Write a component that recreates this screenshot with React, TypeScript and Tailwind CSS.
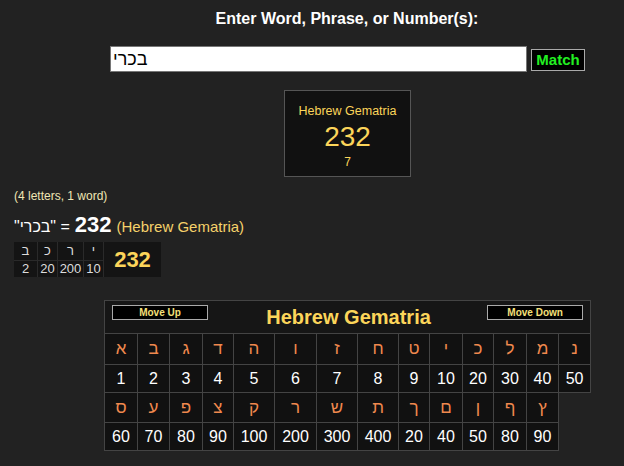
import React from 'react'

const row1 = [
  ['א', '1'], ['ב', '2'], ['ג', '3'], ['ד', '4'], ['ה', '5'], ['ו', '6'], ['ז', '7'],
  ['ח', '8'], ['ט', '9'], ['י', '10'], ['כ', '20'], ['ל', '30'], ['מ', '40'], ['נ', '50'],
]
const row2 = [
  ['ס', '60'], ['ע', '70'], ['פ', '80'], ['צ', '90'], ['ק', '100'], ['ר', '200'], ['ש', '300'],
  ['ת', '400'], ['ך', '20'], ['ם', '40'], ['ן', '50'], ['ף', '80'], ['ץ', '90'],
]
const widths = ['w-[33px]', 'w-[32px]', 'w-[33px]', 'w-[31px]', 'w-[41px]', 'w-[42px]', 'w-[41px]', 'w-[41px]', 'w-[31px]', 'w-[33px]', 'w-[31px]', 'w-[33px]', 'w-[32px]', 'w-[32px]']

const small = [['ב', '2'], ['כ', '20'], ['ר', '200'], ['י', '10']]

const App = () => {
  return (
    <div className="w-[624px] h-[466px] bg-[#222222] text-white font-['Liberation_Sans',Arial,sans-serif] overflow-hidden">
      {/* Search */}
      <div className="pt-[10px] pl-[70px] text-center font-bold text-[16px] leading-[18px]">
        Enter Word, Phrase, or Number(s):
      </div>
      <div className="flex items-start pl-[110px] mt-[18px] gap-[4px]">
        <input
          readOnly
          value="בכרי"
          className="w-[417px] h-[26px] bg-white border border-[#767676] text-black text-[18px] px-[2px] outline-none font-['Liberation_Sans',Arial,sans-serif]"
        />
        <button className="mt-[3px] h-[22px] w-[54px] bg-black border border-[#aaaaaa] text-[#22ee22] font-bold text-[15px] leading-[18px]">
          Match
        </button>
      </div>

      {/* Result box */}
      <div className="mt-[18px] ml-[284px] w-[127px] h-[87px] bg-[#111111] border border-[#555555] flex flex-col items-center pt-[13px] text-[#fcd55a]">
        <div className="text-[12.5px] leading-[14px]">Hebrew Gematria</div>
        <div className="text-[28px] leading-[32px] mt-[3px]">232</div>
        <div className="text-[12px] leading-[14px] mt-[2px]">7</div>
      </div>

      {/* Summary */}
      <div className="pl-[14px] mt-[12px] text-[12px] leading-[14px] text-[#f0e6b4]">(4 letters, 1 word)</div>
      <div className="pl-[14px] mt-[12px] flex items-baseline gap-[5px] leading-[20px]">
        <span className="text-[16px]">"בכרי" =</span>
        <span className="text-[22px] font-bold">232</span>
        <span className="text-[15px] text-[#f5d16a]">(Hebrew Gematria)</span>
      </div>
      <div className="ml-[14px] mt-[5px] w-[146px] grid grid-cols-[23px_19px_25px_19px_57px] grid-rows-[18px_16px] gap-px bg-[#2a2a2a]">
        {small.map(([l]) => (
          <div key={'l' + l} className="bg-[#141414] text-[#dddddd] text-[13px] leading-[18px] text-center">{l}</div>
        ))}
        <div className="row-span-2 bg-[#141414] text-[#fcd55a] font-bold text-[22px] flex items-center justify-center">232</div>
        {small.map(([l, n]) => (
          <div key={'n' + l} className="bg-[#141414] text-[#dddddd] text-[13px] leading-[16px] text-center">{n}</div>
        ))}
      </div>

      {/* Chart */}
      <table className="ml-[104px] mt-[23px] w-[486px] table-fixed border-collapse">
        <colgroup>
          {widths.map((w, i) => (
            <col key={i} className={w} />
          ))}
        </colgroup>
        <tbody>
          <tr>
            <td colSpan={14} className="h-[33px] border border-[#444444] bg-[#161616] align-top">
              <div className="flex items-start justify-between px-[7px] pt-[4px]">
                <button className="w-[96px] h-[15px] bg-black border border-[#aaaaaa] text-[#f5e07a] font-bold text-[10px] leading-[12px]">Move Up</button>
                <div className="text-[#fcd55a] font-bold text-[20px] leading-[22px] mt-[1px] ml-[2px]">Hebrew Gematria</div>
                <button className="w-[96px] h-[15px] bg-black border border-[#aaaaaa] text-[#f5e07a] font-bold text-[10px] leading-[12px]">Move Down</button>
              </div>
            </td>
          </tr>
          <tr>
            {row1.map(([l]) => (
              <td key={l} className="h-[31px] border border-[#444444] bg-[#111111] text-center text-[#f0894e] text-[17px]">{l}</td>
            ))}
          </tr>
          <tr>
            {row1.map(([l, n]) => (
              <td key={l} className="h-[28px] border border-[#444444] bg-[#111111] text-center text-white text-[16px]">{n}</td>
            ))}
          </tr>
          <tr>
            {row2.map(([l]) => (
              <td key={l} className="h-[30px] border border-[#444444] bg-[#111111] text-center text-[#f0894e] text-[17px]">{l}</td>
            ))}
          </tr>
          <tr>
            {row2.map(([l, n]) => (
              <td key={l} className="h-[28px] border border-[#444444] bg-[#111111] text-center text-white text-[16px]">{n}</td>
            ))}
          </tr>
        </tbody>
      </table>
    </div>
  )
}

export default App
